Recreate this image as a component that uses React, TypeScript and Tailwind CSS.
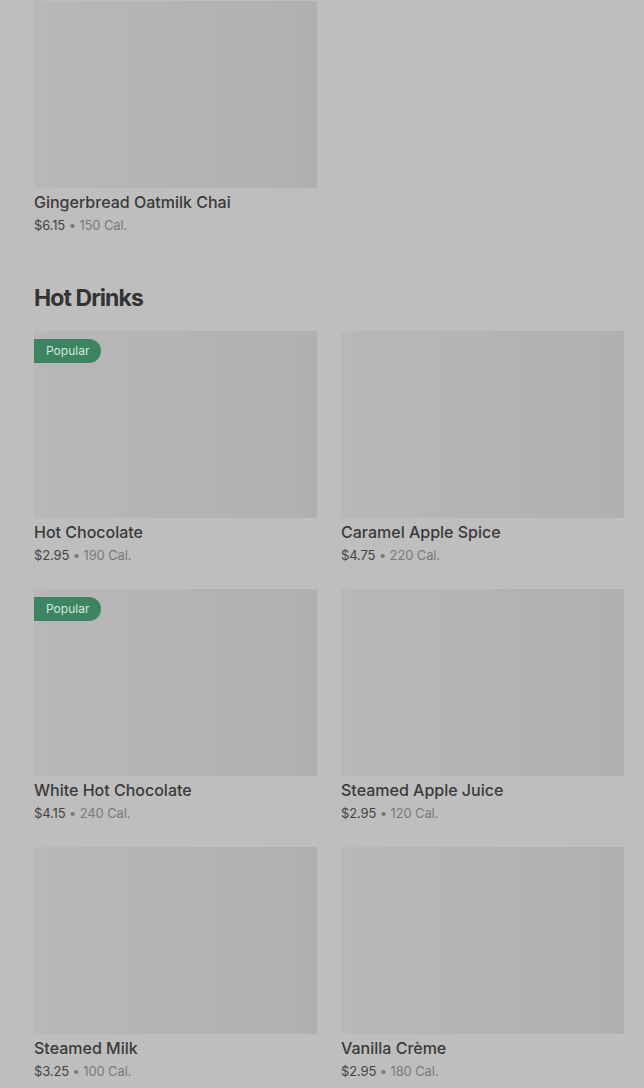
const hotDrinks = [
  { name: "Hot Chocolate", price: "$2.95", cal: "190 Cal.", popular: true },
  { name: "Caramel Apple Spice", price: "$4.75", cal: "220 Cal.", popular: false },
  { name: "White Hot Chocolate", price: "$4.15", cal: "240 Cal.", popular: true },
  { name: "Steamed Apple Juice", price: "$2.95", cal: "120 Cal.", popular: false },
  { name: "Steamed Milk", price: "$3.25", cal: "100 Cal.", popular: false },
  { name: "Vanilla Crème", price: "$2.95", cal: "180 Cal.", popular: false },
];

type Item = { name: string; price: string; cal: string; popular: boolean };

const ItemCard = ({ item }: { item: Item }) => {
  return (
    <div className="flex flex-col">
      <div className="relative h-[187px] w-full bg-gradient-to-r from-[#b8b8b8] to-[#b0b0b0]">
        {item.popular && (
          <span className="absolute left-0 top-2 flex h-6 items-center rounded-r-full bg-[#3d8562] pl-3 pr-3 text-xs text-[#d6e6dc]">
            Popular
          </span>
        )}
      </div>
      <div className="mt-1 text-base leading-5 font-medium text-[#3a3a3a]">{item.name}</div>
      <div className="mt-1 text-[13px] leading-[18px] tracking-[-0.01em]">
        <span className="text-[#444]">{item.price}</span>
        <span className="text-[#7a7a7a]"> • {item.cal}</span>
      </div>
    </div>
  );
};

export default function App() {
  return (
    <div className="min-h-[1088px] w-full bg-[#bebebe] pl-[34px] pr-5 pt-[1px] font-['Inter',sans-serif]">
      <div className="grid grid-cols-2 gap-x-6">
        <ItemCard item={{ name: "Gingerbread Oatmilk Chai", price: "$6.15", cal: "150 Cal.", popular: false }} />
      </div>

      <h2 className="mt-12 text-[23px] leading-8 font-bold tracking-[-0.04em] text-[#333]">Hot Drinks</h2>

      <div className="mt-[17px] grid grid-cols-2 gap-x-6 gap-y-[25px]">
        {hotDrinks.map((item) => (
          <ItemCard key={item.name} item={item} />
        ))}
      </div>
    </div>
  );
}
